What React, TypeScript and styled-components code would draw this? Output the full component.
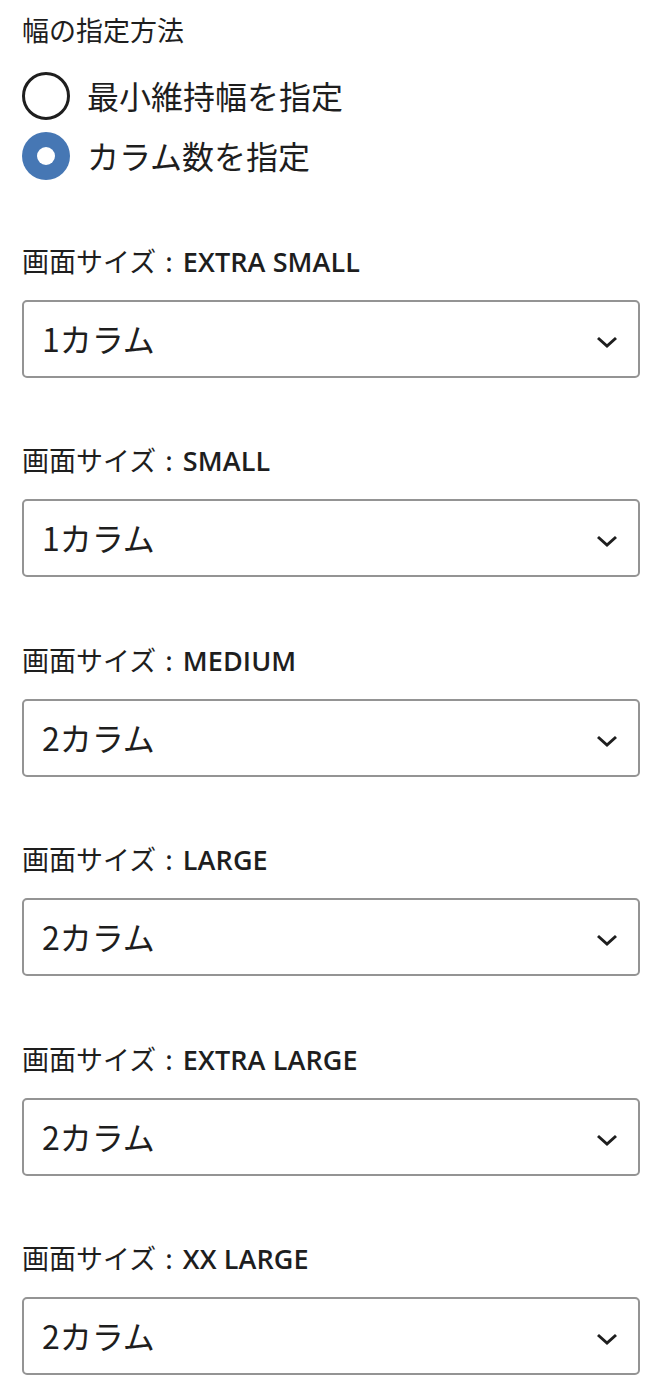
import React from "react";
import styled, { createGlobalStyle } from "styled-components";

const Global = createGlobalStyle`
  html, body { margin: 0; padding: 0; background: #fff; }
  body {
    font-family: "Noto Sans CJK JP", "Noto Sans", sans-serif;
    color: #1e1e1e;
  }
`;

const Panel = styled.div`
  display: flex;
  flex-direction: column;
  padding: 14px 32px 0 22px;
`;

const Fieldset = styled.div`
  display: flex;
  flex-direction: column;
  margin-bottom: 65px;
`;

const Legend = styled.div`
  font-size: 27px;
  line-height: 32px;
  margin-bottom: 26px;
`;

const RadioList = styled.div`
  display: flex;
  flex-direction: column;
  gap: 12px;
`;

const RadioRow = styled.label`
  display: flex;
  align-items: center;
  gap: 17px;
  height: 48px;
  font-size: 32px;
`;

const RadioCircle = styled.span<{ $checked: boolean }>`
  box-sizing: border-box;
  width: 48px;
  height: 48px;
  border-radius: 50%;
  flex: none;
  display: flex;
  align-items: center;
  justify-content: center;
  border: ${(p) => (p.$checked ? "none" : "3px solid #1e1e1e")};
  background: ${(p) => (p.$checked ? "#4677b4" : "#fff")};
  &::after {
    content: "";
    display: ${(p) => (p.$checked ? "block" : "none")};
    width: 18px;
    height: 18px;
    border-radius: 50%;
    background: #fff;
  }
`;

const RadioText = styled.span`
  line-height: 48px;
  margin-top: -2px;
`;

const Field = styled.div`
  display: flex;
  flex-direction: column;
  margin-bottom: 66.4px;
`;

const FieldLabel = styled.div`
  font-size: 27px;
  line-height: 32px;
  margin-bottom: 22px;
  white-space: nowrap;
`;

const Colon = styled.span`
  margin: 0 4px 0 3px;
`;

const SizeName = styled.span`
  font-weight: 600;
  font-family: "Open Sans", "Noto Sans", sans-serif;
  font-size: 27px;
  letter-spacing: 0.1px;
`;

const SelectWrap = styled.div`
  position: relative;
  height: 78px;
`;

const Select = styled.select`
  appearance: none;
  -webkit-appearance: none;
  box-sizing: border-box;
  width: 100%;
  height: 78px;
  border: 2px solid #949494;
  border-radius: 5px;
  background: #fff;
  padding: 0 60px 2px 18px;
  font-family: "Noto Sans CJK JP", "Noto Sans", sans-serif;
  font-size: 32px;
  color: #1e1e1e;
  outline: none;
`;

const Chevron = styled.svg`
  position: absolute;
  right: 22px;
  top: 35px;
  width: 22px;
  height: 14px;
  pointer-events: none;
`;

const sizes = [
  { name: "EXTRA SMALL", value: "1" },
  { name: "SMALL", value: "1" },
  { name: "MEDIUM", value: "2" },
  { name: "LARGE", value: "2" },
  { name: "EXTRA LARGE", value: "2" },
  { name: "XX LARGE", value: "2" },
];

export default function App() {
  return (
    <>
      <Global />
      <Panel>
        <Fieldset>
          <Legend>幅の指定方法</Legend>
          <RadioList>
            <RadioRow>
              <RadioCircle $checked={false} />
              <RadioText>最小維持幅を指定</RadioText>
            </RadioRow>
            <RadioRow>
              <RadioCircle $checked={true} />
              <RadioText>カラム数を指定</RadioText>
            </RadioRow>
          </RadioList>
        </Fieldset>
        {sizes.map((s) => (
          <Field key={s.name}>
            <FieldLabel>
              画面サイズ<Colon> : </Colon>
              <SizeName>{s.name}</SizeName>
            </FieldLabel>
            <SelectWrap>
              <Select defaultValue={s.value}>
                <option value="1">1カラム</option>
                <option value="2">2カラム</option>
                <option value="3">3カラム</option>
              </Select>
              <Chevron viewBox="0 0 22 14">
                <path d="M2 3 L11 11 L20 3" fill="none" stroke="#1e1e1e" strokeWidth="3" />
              </Chevron>
            </SelectWrap>
          </Field>
        ))}
      </Panel>
    </>
  );
}
